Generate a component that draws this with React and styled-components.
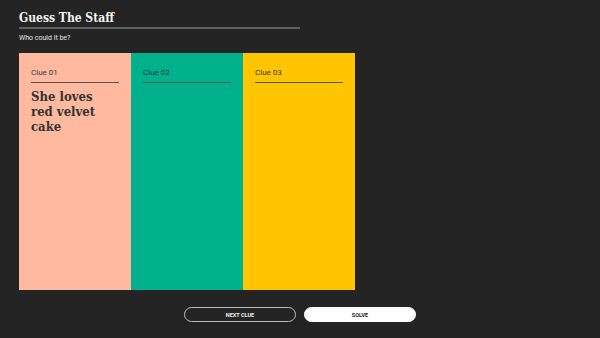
import React from 'react';
import styled, { createGlobalStyle } from 'styled-components';

const clues = [
	{ label: 'Clue 01', color: '#ffb99f', text: 'She loves red velvet cake' },
	{ label: 'Clue 02', color: '#00b18c', text: '' },
	{ label: 'Clue 03', color: '#ffc500', text: '' },
];

export default function App() {
	return (
		<>
			<GlobalStyle />
			<Page>
				<Header>
					<Title>Guess The Staff</Title>
					<Subtitle>Who could it be?</Subtitle>
				</Header>
				<Board>
					{clues.map((c) => (
						<Card key={c.label} color={c.color}>
							<ClueLabel>{c.label}</ClueLabel>
							<ClueText>{c.text}</ClueText>
						</Card>
					))}
				</Board>
				<Actions>
					<Button>NEXT CLUE</Button>
					<Button filled>SOLVE</Button>
				</Actions>
			</Page>
		</>
	);
}

const GlobalStyle = createGlobalStyle`
	html, body {
		margin: 0;
		background: #242424;
	}
`;

const Page = styled.div`
	width: 600px;
	height: 338px;
	box-sizing: border-box;
	padding: 11px 19px 0;
	display: flex;
	flex-direction: column;
	font-family: Roboto, 'Liberation Sans', sans-serif;
`;

const Header = styled.div`
	width: 281px;
`;

const Title = styled.h1`
	margin: 0;
	font-family: 'DejaVu Serif', serif;
	font-stretch: condensed;
	font-weight: 700;
	font-size: 12px;
	line-height: 14px;
	color: #f2f2f2;
	padding-bottom: 2px;
	border-bottom: 2px solid #5f5f5f;
`;

const Subtitle = styled.p`
	margin: 5px 0 0;
	font-size: 7px;
	color: #e6e6e6;
`;

const Board = styled.div`
	margin-top: 11px;
	display: grid;
	grid-template-columns: repeat(3, 112px);
	height: 237px;
`;

const Card = styled.div`
	background: ${(p) => p.color};
	padding: 15px 12px 0;
`;

const ClueLabel = styled.div`
	font-size: 8px;
	line-height: 10px;
	color: #3a3a3a;
	padding-bottom: 4px;
	border-bottom: 1px solid #555;
	width: 88px;
`;

const ClueText = styled.div`
	margin-top: 6px;
	width: 70px;
	font-family: 'DejaVu Serif', serif;
	font-stretch: condensed;
	font-weight: 700;
	font-size: 13px;
	line-height: 15px;
	color: #333;
`;

const Actions = styled.div`
	margin-top: 17px;
	display: flex;
	justify-content: center;
	gap: 8px;
`;

const Button = styled.button`
	width: 112px;
	height: 15px;
	border-radius: 8px;
	border: 1px solid ${(p) => (p.filled ? '#fff' : '#bdbdbd')};
	background: ${(p) => (p.filled ? '#fff' : 'transparent')};
	color: ${(p) => (p.filled ? '#222' : '#f0f0f0')};
	font-family: Roboto, 'Liberation Sans', sans-serif;
	font-weight: 700;
	font-size: 5.5px;
	padding: 0;
`;
